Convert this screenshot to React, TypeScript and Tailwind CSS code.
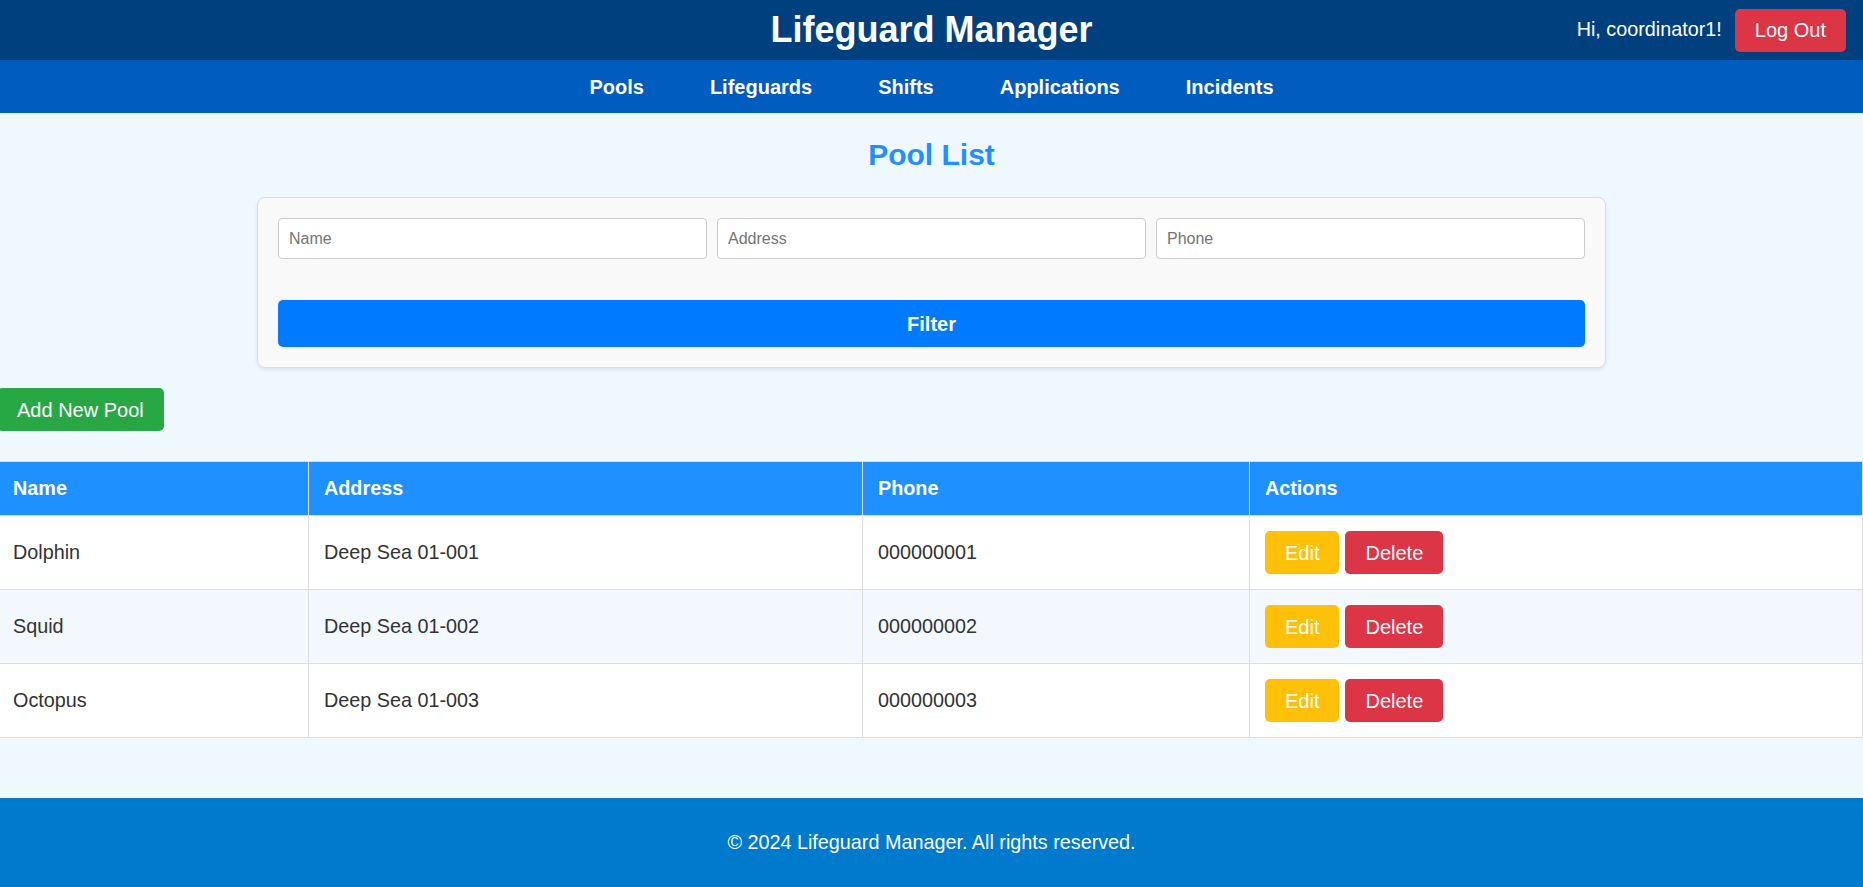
import React, { useState } from 'react';

type Pool = {
    name: string;
    address: string;
    phone: string;
};

const pools: Pool[] = [
    { name: 'Dolphin', address: 'Deep Sea 01-001', phone: '000000001' },
    { name: 'Squid', address: 'Deep Sea 01-002', phone: '000000002' },
    { name: 'Octopus', address: 'Deep Sea 01-003', phone: '000000003' },
];

const navLinks = ['Pools', 'Lifeguards', 'Shifts', 'Applications', 'Incidents'];

const App = () => {
    const [filters, setFilters] = useState({ name: '', address: '', phone: '' });

    const handleChange = (field: 'name' | 'address' | 'phone', value: string) => {
        setFilters({ ...filters, [field]: value });
    };

    return (
        <div className="min-h-screen flex flex-col bg-[#eff7ff] font-['Liberation_Sans',Arial,sans-serif] text-[#333]">
            {/* Top bar */}
            <header className="grid grid-cols-[1fr_auto_1fr] items-center h-[60px] bg-[#00407f] text-white">
                <div />
                <h1 className="text-[36px] font-bold leading-none">Lifeguard Manager</h1>
                <div className="flex items-center justify-end gap-[13px] pr-[17px]">
                    <span className="text-[19.8px]">Hi, coordinator1!</span>
                    <button className="h-[43px] px-[20px] rounded-[5px] bg-[#dc3545] text-[20px] text-white">
                        Log Out
                    </button>
                </div>
            </header>

            {/* Nav */}
            <nav className="flex items-center justify-center gap-[66px] h-[53px] bg-[#005cbf]">
                {navLinks.map((link) => (
                    <a key={link} href="#" className="text-[20px] font-bold text-white">
                        {link}
                    </a>
                ))}
            </nav>

            <main className="flex-1">
                <h2 className="mt-[24px] text-center text-[30px] leading-[35px] font-bold text-[#1e90ff]">
                    Pool List
                </h2>

                {/* Filter box */}
                <div className="mx-auto mt-[25px] w-[1349px] rounded-[8px] border border-[#ddd] bg-[#f9f9f9] p-[20px] shadow-[0_2px_4px_rgba(0,0,0,0.08)]">
                    <div className="grid grid-cols-3 gap-[10px]">
                        <input
                            value={filters.name}
                            onChange={(e) => handleChange('name', e.target.value)}
                            placeholder="Name"
                            className="h-[41px] rounded-[4px] border border-[#ccc] bg-white px-[10px] text-[16px] placeholder:text-[#757575] outline-none"
                        />
                        <input
                            value={filters.address}
                            onChange={(e) => handleChange('address', e.target.value)}
                            placeholder="Address"
                            className="h-[41px] rounded-[4px] border border-[#ccc] bg-white px-[10px] text-[16px] placeholder:text-[#757575] outline-none"
                        />
                        <input
                            value={filters.phone}
                            onChange={(e) => handleChange('phone', e.target.value)}
                            placeholder="Phone"
                            className="h-[41px] rounded-[4px] border border-[#ccc] bg-white px-[10px] text-[16px] placeholder:text-[#757575] outline-none"
                        />
                    </div>
                    <button className="mt-[41px] h-[47px] w-full rounded-[5px] bg-[#007bff] text-[20px] font-bold text-white">
                        Filter
                    </button>
                </div>

                <div className="-ml-[3px]">
                    <button className="mt-[20px] h-[43px] px-[20px] rounded-[5px] bg-[#28a745] text-[20px] text-white">
                        Add New Pool
                    </button>

                    {/* Table */}
                    <table className="mt-[30px] w-full border-collapse text-left text-[19.8px]">
                        <thead>
                            <tr className="h-[54px] bg-[#1e90ff] text-white">
                                <th className="w-[311px] border border-[#ddd] px-[15px] font-bold">Name</th>
                                <th className="w-[554px] border border-[#ddd] px-[15px] font-bold">Address</th>
                                <th className="w-[387px] border border-[#ddd] px-[15px] font-bold">Phone</th>
                                <th className="border border-[#ddd] px-[15px] font-bold">Actions</th>
                            </tr>
                        </thead>
                        <tbody>
                            {pools.map((pool, index) => (
                                <tr key={pool.name} className={`h-[74px] ${index % 2 === 1 ? 'bg-[#f2f8fe]' : 'bg-white'}`}>
                                    <td className="border border-[#ddd] px-[15px]">{pool.name}</td>
                                    <td className="border border-[#ddd] px-[15px]">{pool.address}</td>
                                    <td className="border border-[#ddd] px-[15px]">{pool.phone}</td>
                                    <td className="border border-[#ddd] px-[15px]">
                                        <div className="flex items-center gap-[6px]">
                                            <button className="h-[43px] px-[20px] rounded-[5px] bg-[#ffc107] text-[20px] text-white">
                                                Edit
                                            </button>
                                            <button className="h-[43px] px-[20px] rounded-[5px] bg-[#dc3545] text-[20px] text-white">
                                                Delete
                                            </button>
                                        </div>
                                    </td>
                                </tr>
                            ))}
                        </tbody>
                    </table>
                </div>
            </main>

            <footer className="mt-[60px] flex h-[90px] items-center justify-center bg-[#007acc] text-[19.8px] text-white">
                © 2024 Lifeguard Manager. All rights reserved.
            </footer>
        </div>
    );
};

export default App;
